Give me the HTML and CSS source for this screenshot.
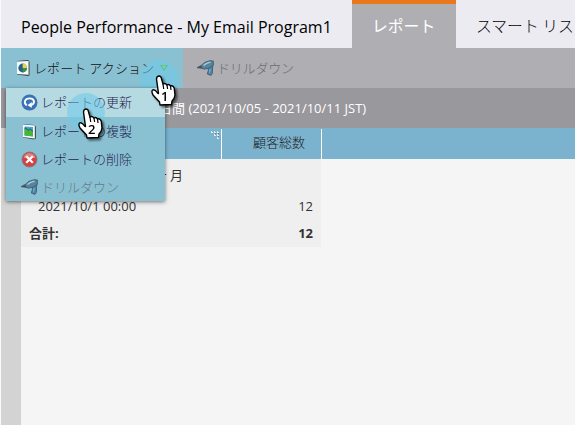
FILE: index.html
```html
<!DOCTYPE html>
<html lang="ja">
<head>
<meta charset="utf-8">
<title>People Performance</title>
<link rel="stylesheet" href="styles.css">
</head>
<body>
<svg width="0" height="0" class="defs">
  <defs>
    <symbol id="drill" viewBox="0 0 17 16">
      <path d="M10.5 7 L15.8 4 L15.5 9 L15.3 13.5 L14 15.4 L10.3 14 L11.5 10Z" fill="#4f86ab" stroke="#3c5363" stroke-width=".8"/>
      <path d="M0 7.7 L4.5 5.2 L8 2.2 L13 .7 L16.4 1 L16.3 5.5 L12.5 8 L7.5 9.2 L4.5 8.3Z" fill="#57849d" stroke="#3f5564" stroke-width=".8"/>
      <path d="M0 7.7 L4.5 5.5 L5.5 8.3Z" fill="#4b5358"/>
      <path d="M6.5 5.5 L9.5 3.4 L13.5 2.2" stroke="#a5cde0" stroke-width="1.4" fill="none"/>
      <path d="M13 9 L12.6 12.5" stroke="#86b7d6" fill="none"/>
    </symbol>
    <symbol id="hand" viewBox="0 0 25 31">
      <path d="M6 2 Q8 0 10 2 L12 9 Q14 7.5 16 10 Q18 8.7 19.5 11 Q22 10 23.2 13 L24 20 Q23.5 24 21 26 L20.5 29.5 L9 30 L8.5 27 L2 20 Q0 16 1.7 15 Q4 14 6.5 18 L7.5 18.5 L5.5 4Z" fill="#fff" stroke="#000" stroke-width="1.4" stroke-linejoin="round"/>
      <path d="M12 9 L12.7 14 M16 10 L16.6 14 M19.5 11 L20 15" fill="none" stroke="#000" stroke-width="1.2"/>
    </symbol>
  </defs>
</svg>
<div class="app">
  <header class="tabs">
    <div class="title">People Performance - My Email Program1</div>
    <div class="tab active"><span>レポート</span></div>
    <div class="tab"><span>スマート リス</span></div>
  </header>
  <nav class="toolbar">
    <div class="action">
      <svg class="ic-report" width="15" height="16" viewBox="0 0 15 16"><path d="M1 1 L12 0 L14 2 V15 L12 16 L1 14.5Z" fill="#34434b"/><path d="M1 1.5 L12.5 1 V14.8 L1 14Z" fill="#f7fafb"/><path d="M13 1 V15" stroke="#a7b1b7"/><circle cx="6.7" cy="8" r="4.4" fill="#24628f"/><path d="M6.7 8 V3.6 A4.4 4.4 0 0 1 11.1 8Z" fill="#e7d64d"/><path d="M6.7 8 H11.1 A4.4 4.4 0 0 1 6.7 12.4Z" fill="#42923c"/></svg>
      <span class="action-label">レポート アクション</span>
    </div>
    <div class="drill"><svg width="17" height="16"><use href="#drill" width="17" height="16"/></svg><span>ドリルダウン</span></div>
  </nav>
  <div class="filter"><span>日間 (2021/10/05 - 2021/10/11 JST)</span></div>
  <main class="content">
    <div class="gutter"></div>
    <div class="report">
      <div class="head">
        <div class="col first"><svg width="9" height="9" viewBox="0 0 9 9"><path d="M0 1h2m1 0h2m1 0h2M3 4h2m1 0h2M6 7h2" stroke="#fff" stroke-width="1.4"/><path d="M1 0h1m2 0h1m2 0h1M4 3h1m2 0h1M7 6h1" stroke="#555"/></svg></div>
        <div class="col second">顧客総数</div>
      </div>
      <div class="rows">
        <div class="row group"><span>ヶ 月</span></div>
        <div class="row item"><span>2021/10/1 00:00</span><span>12</span></div>
        <div class="row total"><span>合計:</span><span>12</span></div>
      </div>
    </div>
  </main>
  <i class="halo one"></i>
  <svg class="arrow" width="8" height="7"><path d="M0 1H8L4 7Z" fill="#5db98b"/><path d="M1.5 1.5H6.5L4 5.5Z" fill="#72d69b"/></svg>
  <div class="menu">
    <div class="mi hot"><svg width="17" height="17" viewBox="0 0 17 17"><circle cx="8.5" cy="8.5" r="8" fill="#3a73b3"/><path d="M5.8 11.3 Q3.2 9.6 4 7 Q5.1 4.4 8.5 4.4 Q12.2 4.4 13 7.2 Q13.3 9.8 10.5 11" fill="none" stroke="#fff" stroke-width="1.9"/><path d="M10.8 8 V13.8 L6.5 11.2Z" fill="#fff"/></svg><span>レポートの更新</span></div>
    <div class="mi"><svg width="17" height="17" viewBox="0 0 17 17"><path d="M2 1 L13 2 L15 3.5 V15.5 L13 16.5 L2 14.5Z" fill="#40535c"/><path d="M2 1.5 L13.8 2.5 V15.5 L2 14Z" fill="#f8fbfb"/><path d="M3.5 3.5 L12 4 V13.5 L3.5 12.5Z" fill="#4ba5cf"/><path d="M3.5 6 L5 5 L7 8 L9 6 L12 9 V13.5 L3.5 12.5Z" fill="#44b638"/><path d="M3.5 5.8 L5 4.7 L7 7.5 L9 5.7 L12 8.5" stroke="#195477" fill="none"/></svg><span>レポートの複製</span></div>
    <div class="mi"><svg width="17" height="17" viewBox="0 0 17 17"><circle cx="8.5" cy="8.5" r="7.5" fill="#d83f43" stroke="#777e82"/><path d="M2.5 7 A6.2 6.2 0 0 1 14.5 7" fill="#e68380"/><path d="M5.2 5.2 L11.8 11.8 M11.8 5.2 L5.2 11.8" stroke="#fff" stroke-width="2.2"/></svg><span>レポートの削除</span></div>
    <div class="mi off"><svg width="17" height="16"><use href="#drill" width="17" height="16"/></svg><span>ドリルダウン</span></div>
  </div>
  <i class="halo two"></i>
  <div class="hand h1"><svg width="25" height="31"><use href="#hand" width="25" height="31"/></svg><b>1</b></div>
  <div class="hand h2"><svg width="25" height="31"><use href="#hand" width="25" height="31"/></svg><b>2</b></div>
</div>
</body>
</html>
```

FILE: styles.css
```css
* { box-sizing: border-box; }
body { margin: 0; width: 575px; height: 425px; overflow: hidden; background: #fafafa; font: 13px/18px "Open Sans", "Noto Sans CJK JP", sans-serif; color: #333; }
svg { display: block; flex: none; }
.defs { position: absolute; }
.app { position: relative; height: 425px; padding-left: 1px; overflow: hidden; white-space: nowrap; }
.tabs { display: flex; height: 48px; background: #ecebf2; color: #000; }
.title { width: 351px; padding: 15px 0 0 20px; font-size: 16px; line-height: 24px; }
.tab { padding: 14px 0 0 20px; width: 104px; flex: none; font-family: "Noto Sans CJK JP", sans-serif; font-size: 15.8px; font-weight: 300; line-height: 24px; }
.tab.active { background: #afaeb3; border-top: 4px solid #e9781c; color: #fff; padding-top: 10px; font-weight: 400; }
.toolbar { display: flex; height: 40px; background: #afaeb3; font-family: "Noto Sans CJK JP", sans-serif; font-weight: 300; }
.action { width: 182px; background: #8ac1d2; display: flex; align-items: center; padding-left: 15px; gap: 3px; color: #111; }
.action-label { margin-top: -1px; letter-spacing: .1px; }
.drill { display: flex; align-items: center; padding-left: 14px; gap: 3px; color: #6c6c70; }
.drill span { margin-top: -1px; letter-spacing: -.2px; }
.filter { height: 40px; padding: 11px 0 0 158px; background: #99989d; color: #fff; }
.content { display: flex; height: 297px; }
.gutter { width: 20px; background: #d3d3d3; }
.report { flex: 1; background: #f5f5f5; }
.head { display: flex; height: 31px; background: #7bb3cf; padding-top: 1px; }
.col { border-right: 1px solid #fff; }
.first { width: 201px; padding: 2px 1px 0 0; display: flex; justify-content: flex-end; }
.second { width: 100px; padding: 4px 0 0 31px; font-family: "Noto Sans CJK JP", sans-serif; font-weight: 300; color: #222; }
.rows { width: 300px; height: 88px; background: #efefef; }
.row { display: flex; justify-content: space-between; padding-right: 8px; }
.group { height: 33px; padding: 7px 0 0 134px; word-spacing: -1.5px; }
.item { height: 28px; padding-top: 5px; padding-left: 17px; }
.total { padding-top: 4px; padding-left: 8px; font-weight: 700; }
.menu { position: absolute; left: 6px; top: 88px; width: 159px; height: 113px; background: #8ac1d2; box-shadow: 0 1px 4px #0008; font-family: "Noto Sans CJK JP", sans-serif; font-weight: 300; color: #252550; }
.mi { display: flex; height: 28px; align-items: center; padding-left: 15px; gap: 4px; }
.mi span { margin: -1px 0 0 -1px; }
.mi.hot span { margin-top: -2px; }
.mi.hot { height: 29px; background: #b5dae2; }
.mi.off { color: #637b8a; }
.halo { position: absolute; width: 38px; height: 38px; border-radius: 50%; background: #6dcbea8c; }
.one { left: 140px; top: 60px; }
.two { left: 67px; top: 93px; }
.arrow { position: absolute; left: 160px; top: 64px; }
.hand { position: absolute; width: 25px; height: 31px; filter: drop-shadow(2px 2px 1px #0008); color: #000; }
.hand b { position: absolute; left: 10px; top: 14px; font: 600 13px/15px "Open Sans", sans-serif; }
.h1 { left: 151px; top: 75px; }
.h2 { left: 78px; top: 108px; }
```
